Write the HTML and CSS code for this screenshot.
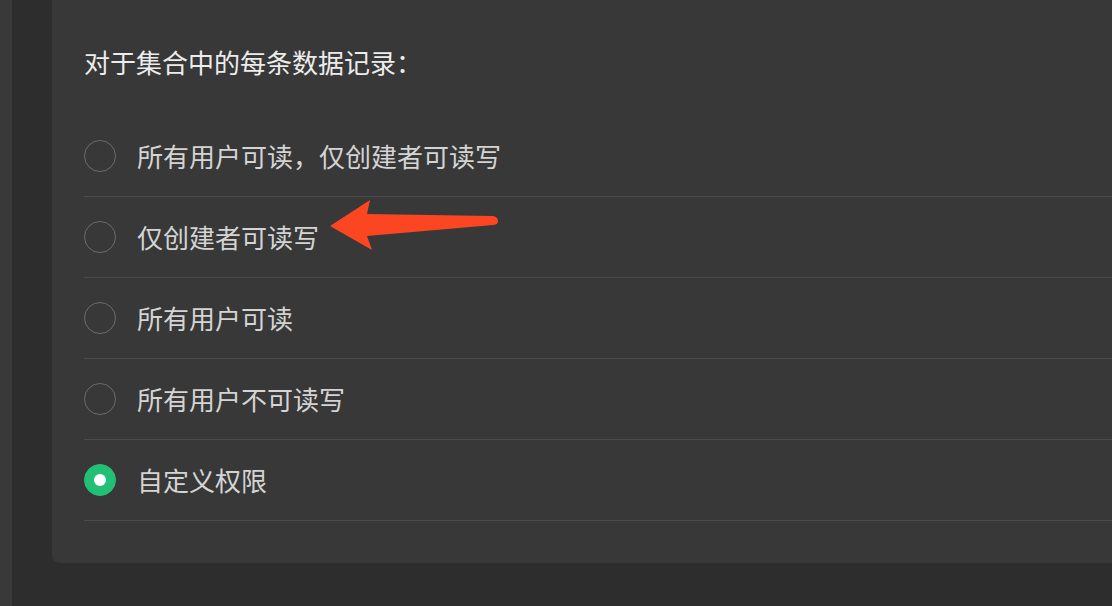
FILE: index.html
```html
<!DOCTYPE html>
<html lang="zh-CN">
<head>
  <meta charset="UTF-8" />
  <meta name="viewport" content="width=device-width, initial-scale=1.0" />
  <title>数据权限</title>
  <link rel="stylesheet" href="styles.css">
</head>
<body>
  <div class="page">
    <div class="edge"></div>
    <div class="gutter"></div>
    <div class="card">
      <h2 class="title">对于集合中的每条数据记录：</h2>
      <div class="options">
        <label class="option">
          <span class="radio"></span>
          <span class="label">所有用户可读，仅创建者可读写</span>
        </label>
        <label class="option">
          <span class="radio"></span>
          <span class="label">仅创建者可读写</span>
        </label>
        <label class="option">
          <span class="radio"></span>
          <span class="label">所有用户可读</span>
        </label>
        <label class="option">
          <span class="radio"></span>
          <span class="label">所有用户不可读写</span>
        </label>
        <label class="option">
          <span class="radio checked"></span>
          <span class="label">自定义权限</span>
        </label>
      </div>
    </div>
  </div>

  <!-- annotation arrow -->
  <svg class="arrow" width="180" height="60" viewBox="0 0 180 60">
    <path d="M10 26 L50 0 L47 14 L173 16 Q178 17 178 21 Q178 25 173 25 L47 36 L52 50 Z" fill="#fc4521"/>
  </svg>
</body>
</html>
```

FILE: styles.css
```css
body {
  margin: 0;
  padding: 0;
  background: #2d2d2d;
  font-family: "Noto Sans CJK SC", "Noto Sans", sans-serif;
  overflow: hidden;
}
.page {
  display: flex;
  align-items: flex-start;
  height: 606px;
}
.edge {
  width: 12px;
  height: 100%;
  background: #393939;
  flex-shrink: 0;
}
.gutter {
  width: 40px;
  flex-shrink: 0;
}
.card {
  flex: 1;
  background: #383838;
  border-radius: 0 0 0 8px;
  padding: 45px 0 42px 32px;
}
.title {
  margin: 0 0 37px;
  font-size: 26px;
  line-height: 34px;
  font-weight: normal;
  color: #ececec;
}
.option {
  display: flex;
  align-items: center;
  height: 80px;
  border-bottom: 1px solid #4b4b4b;
}
.radio {
  width: 30px;
  height: 30px;
  border: 1px solid #6b6b6b;
  border-radius: 50%;
  box-sizing: content-box;
  margin-right: 21px;
  position: relative;
}
.radio.checked {
  background: #22bf75;
  border-color: #22bf75;
}
.radio.checked::after {
  content: "";
  position: absolute;
  left: 9px;
  top: 9px;
  width: 12px;
  height: 12px;
  border-radius: 50%;
  background: #ffffff;
}
.label {
  font-size: 26px;
  line-height: 34px;
  color: #d4d4d4;
}
.arrow {
  position: absolute;
  left: 320px;
  top: 200px;
}
```
